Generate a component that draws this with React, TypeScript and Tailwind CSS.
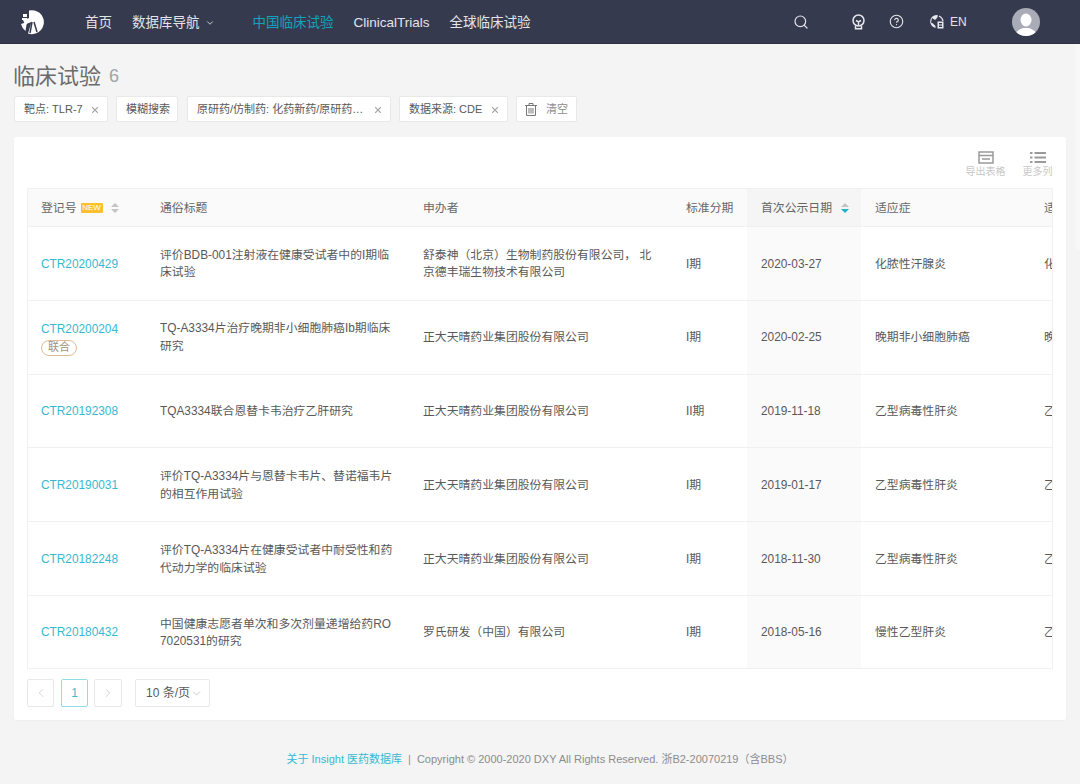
import { ChevronDown, ChevronLeft, ChevronRight, HelpCircle, Search, X } from "lucide-react"

type Trial = {
  id: string;
  title: string;
  sponsor: string;
  phase: string;
  date: string;
  indication: string;
  combo?: boolean;
};

const trials: Trial[] = [
  { id: "CTR20200429", title: "评价BDB-001注射液在健康受试者中的I期临床试验", sponsor: "舒泰神（北京）生物制药股份有限公司， 北京德丰瑞生物技术有限公司", phase: "I期", date: "2020-03-27", indication: "化脓性汗腺炎" },
  { id: "CTR20200204", title: "TQ-A3334片治疗晚期非小细胞肺癌Ib期临床研究", sponsor: "正大天晴药业集团股份有限公司", phase: "I期", date: "2020-02-25", indication: "晚期非小细胞肺癌", combo: true },
  { id: "CTR20192308", title: "TQA3334联合恩替卡韦治疗乙肝研究", sponsor: "正大天晴药业集团股份有限公司", phase: "II期", date: "2019-11-18", indication: "乙型病毒性肝炎" },
  { id: "CTR20190031", title: "评价TQ-A3334片与恩替卡韦片、替诺福韦片的相互作用试验", sponsor: "正大天晴药业集团股份有限公司", phase: "I期", date: "2019-01-17", indication: "乙型病毒性肝炎" },
  { id: "CTR20182248", title: "评价TQ-A3334片在健康受试者中耐受性和药代动力学的临床试验", sponsor: "正大天晴药业集团股份有限公司", phase: "I期", date: "2018-11-30", indication: "乙型病毒性肝炎" },
  { id: "CTR20180432", title: "中国健康志愿者单次和多次剂量递增给药RO7020531的研究", sponsor: "罗氏研发（中国）有限公司", phase: "I期", date: "2018-05-16", indication: "慢性乙型肝炎" },
]

function Logo() {
  return (
    <svg width="26" height="26" viewBox="0 0 26 26">
      <path d="M10 1.500A12 12 0 1 1 9 24.500L12.500 13L6 15.500L4 11L10 9Z" fill="#fff" />
      <path d="M4 5h4v3H4zM3 9h5v2H3z" fill="#fff" />
      <path d="M2 15l6-2-1.500 9A12 12 0 0 1 2 15Z" fill="#fff" />
      <path d="M13 13L11 24M15 13l3 10" stroke="#363a4f" strokeWidth="1.500" fill="none" />
    </svg>
  )
}

function BulbIcon() {
  return (
    <svg width="15" height="16" viewBox="0 0 15 16" fill="none" stroke="#e8e8ec" strokeWidth="1.500">
      <circle cx="7.500" cy="6.500" r="5.500" />
      <path d="M5 6.500l2.500 1.500L10 6.500M7.500 8v3.500M4.500 12v2.800h6V12" />
    </svg>
  )
}

function LangIcon() {
  return (
    <svg width="15" height="15" viewBox="0 0 15 15">
      <path d="M7.500 1a6.500 6.500 0 0 0-1 12.900V12L4 9.500 2 8.500 3 4l3 2 2-2 1-2.500A6.500 6.500 0 0 0 7.500 1Z" fill="#e8e8ec" />
      <path d="M10 2a6.500 6.500 0 0 1 4 5" stroke="#e8e8ec" strokeWidth="1.300" fill="none" />
      <rect x="8.500" y="7.500" width="6" height="7" fill="#e8e8ec" />
      <path d="M10 9.500h3M10 11h3M10 12.500h3" stroke="#363a4f" />
    </svg>
  )
}

function TrashIcon() {
  return (
    <svg width="12" height="13" viewBox="0 0 12 13" fill="none" stroke="#777" strokeWidth="1">
      <path d="M0 2.500h12M4 2.500V.5h4v2M1.500 2.500v10h9v-10M4 5v5.500M6 5v5.500M8 5v5.500" />
    </svg>
  )
}

function Avatar() {
  return (
    <svg width="28" height="28" viewBox="0 0 28 28" className="rounded-full">
      <rect width="28" height="28" fill="#a9abb6" />
      <ellipse cx="14" cy="12" rx="5.500" ry="6.500" fill="#fff" />
      <path d="M3 28c1-6 6-7 8-8h6c2 1 7 2 8 8Z" fill="#fff" />
    </svg>
  )
}

function SortArrows({ active }: { active?: boolean }) {
  return (
    <span className="flex flex-col gap-[2px]">
      <span className="h-0 w-0 border-x-[4px] border-b-[4px] border-x-transparent border-b-[#c4c4c4]" />
      <span className={`h-0 w-0 border-x-[4px] border-t-[4px] border-x-transparent ${active ? "border-t-[#1db5cd]" : "border-t-[#c4c4c4]"}`} />
    </span>
  )
}

function FilterTag({ label, closable = true, className = "" }: { label: string; closable?: boolean; className?: string }) {
  return (
    <div className={`flex h-[26px] items-center justify-between rounded-[2px] border border-[#e8e8e8] bg-white pl-[9px] pr-[7px] pt-px text-[11px] whitespace-nowrap text-[#595959] ${className}`}>
      <span>{label}</span>
      {closable && <X size={10} strokeWidth={2.600} className="text-[#a8a8a8]" />}
    </div>
  )
}

function PageButton({ children, active, className = "w-[27px]" }: { children: React.ReactNode; active?: boolean; className?: string }) {
  return (
    <div className={`flex h-[28px] items-center justify-center rounded-[2px] border text-[12px] ${className} ${active ? "border-[#8fdde8] text-[#3fb9cf]" : "border-[#e8e8e8] text-[#c8c8c8]"}`}>
      {children}
    </div>
  )
}

export default function App() {
  return (
    <div className="relative flex min-h-[784px] flex-col bg-[#f4f4f4] font-['Liberation_Sans','Noto_Sans_CJK_SC',sans-serif] text-[#595959]">
      <div className="absolute right-0 top-[44px] h-[206px] w-[5px] bg-[#f7f7f7]" />
      <header className="flex h-[44px] items-center border-b border-[#2d3144] bg-[#363a4f] text-[13.5px] text-[#e4e4e8]">
        <div className="ml-[19px] flex w-[66px] items-center"><Logo /></div>
        <nav className="flex items-center pt-[3px]">
          <span className="mr-[20px]">首页</span>
          <span className="flex items-center">数据库导航<ChevronDown size={10} className="ml-[5px]" /></span>
          <span className="ml-[38px] text-[#10a5bd]">中国临床试验</span>
          <span className="ml-[20px]">ClinicalTrials</span>
          <span className="ml-[20px]">全球临床试验</span>
        </nav>
        <div className="ml-auto flex items-center">
          <Search size={16} strokeWidth={1.800} className="mr-[42px]" />
          <BulbIcon />
          <HelpCircle size={15} strokeWidth={1.800} className="ml-[23px]" />
          <span className="ml-[25px]"><LangIcon /></span>
          <span className="ml-[6px] w-[62px] pt-px text-[12px]">EN</span>
          <span className="mr-[40px]"><Avatar /></span>
        </div>
      </header>

      <main className="flex flex-1 flex-col px-[14px]">
        <h1 className="mt-[17px] -ml-px flex h-[30px] items-center text-[22px] font-normal text-[#6b6b6b]">
          临床试验<span className="ml-[8px] text-[18px] text-[#a3a3a3]">6</span>
        </h1>
        <div className="mt-[5px] flex gap-[8px]">
          <FilterTag label="靶点: TLR-7" className="w-[94px]" />
          <FilterTag label="模糊搜索" closable={false} className="w-[62px]" />
          <FilterTag label="原研药/仿制药: 化药新药/原研药…" className="ml-px w-[204px]" />
          <FilterTag label="数据来源: CDE" className="w-[109px]" />
          <div className="flex h-[26px] w-[61px] items-center justify-center gap-[9px] rounded-[2px] border border-[#e8e8e8] bg-white pt-px text-[11px] text-[#8c8c8c]">
            <TrashIcon />
            <span>清空</span>
          </div>
        </div>

        <section className="mt-[15px] h-[583px] rounded-[2px] bg-white px-[13px] shadow-[0_1px_2px_rgba(0,0,0,0.03)]">
          <div className="flex h-[51px] items-start justify-end pt-[14px] text-[10px] text-[#c8c8c8]">
            <div className="flex w-[41px] flex-col items-center">
              <svg width="16" height="13" viewBox="0 0 16 13" fill="none" stroke="#9a9a9a" strokeWidth="1.500">
                <rect x="1" y="1" width="14" height="11" />
                <path d="M1 4.500h14M4 8h8" />
              </svg>
              <span className="mt-[1px] leading-[14px]">导出表格</span>
            </div>
            <div className="ml-[16px] flex w-[31px] flex-col items-center">
              <svg width="16" height="13" viewBox="0 0 16 13" stroke="#9a9a9a" strokeWidth="1.800">
                <path d="M0 2h2.500M4.500 2H16M0 6.500h2.500M4.500 6.500H16M0 11h2.500M4.500 11H16" />
              </svg>
              <span className="mt-[1px] leading-[14px]">更多列</span>
            </div>
          </div>

          <div className="overflow-hidden border-x border-b border-[#f0f0f0]">
            <table className="w-[1160px] table-fixed border-collapse text-left text-[11.85px]">
              <colgroup>
                <col className="w-[118px]" />
                <col className="w-[263px]" />
                <col className="w-[263px]" />
                <col className="w-[75px]" />
                <col className="w-[114px]" />
                <col className="w-[169px]" />
                <col className="w-[158px]" />
              </colgroup>
              <thead>
                <tr className="h-[38px] border-y border-[#f0f0f0] bg-[#fafafa] text-[#666]">
                  <th className="pl-[13px] pt-[2px] font-normal">
                    <span className="flex items-center">
                      登记号
                      <span className="ml-[4px] flex h-[10px] w-[22px] items-center justify-center rounded-[1px] bg-[#fcc02e] text-[8px] leading-none text-white">NEW</span>
                      <span className="ml-[8px]"><SortArrows /></span>
                    </span>
                  </th>
                  <th className="pl-[14px] pt-[2px] font-normal">通俗标题</th>
                  <th className="pl-[14px] pt-[2px] font-normal">申办者</th>
                  <th className="pl-[14px] pt-[2px] font-normal">标准分期</th>
                  <th className="bg-[#f5f5f5] pl-[14px] pt-[2px] font-normal">
                    <span className="flex items-center gap-[9px]">首次公示日期<SortArrows active /></span>
                  </th>
                  <th className="pl-[14px] pt-[2px] font-normal">适应症</th>
                  <th className="pl-[14px] pt-[2px] font-normal">适应症</th>
                </tr>
              </thead>
              <tbody>
                {trials.map((t, i) => (
                  <tr key={t.id} className="h-[73.8px] border-b border-[#f0f0f0] leading-[17.7px] last:h-[73px] last:border-b-0">
                    <td className="pl-[13px] pt-[2px]">
                      <div className="text-[#36b9d0]">{t.id}</div>
                      {t.combo && (
                        <span className="mt-[1px] flex h-[16px] w-[36px] items-center justify-center rounded-full border border-[#ddbb98] text-[11px] text-[#a58f78]">联合</span>
                      )}
                    </td>
                    <td className="pl-[14px] pr-[14px] pt-[2px] break-all">{t.title}</td>
                    <td className="pl-[14px] pr-[17px] pt-[2px]">{t.sponsor}</td>
                    <td className="pl-[14px] pt-[2px]">{t.phase}</td>
                    <td className="bg-[#fafafa] pl-[14px] pt-[2px]">{t.date}</td>
                    <td className="pl-[14px] pt-[2px]">{t.indication}</td>
                    <td className="pl-[14px] pt-[2px] whitespace-nowrap">{i === 5 ? "乙型肝炎" : t.indication}</td>
                  </tr>
                ))}
              </tbody>
            </table>
          </div>

          <div className="mt-[10px] flex items-center">
            <PageButton><ChevronLeft size={14} strokeWidth={1.300} /></PageButton>
            <div className="ml-[7px]"><PageButton active>1</PageButton></div>
            <div className="ml-[6px]"><PageButton className="w-[28px]"><ChevronRight size={14} strokeWidth={1.300} /></PageButton></div>
            <div className="ml-[13px] flex h-[28px] w-[75px] items-center rounded-[2px] border border-[#e8e8e8] pl-[10px] text-[12px]">
              10 条/页<ChevronDown size={13} strokeWidth={1.100} className="text-[#aaa]" />
            </div>
          </div>
        </section>

        <footer className="mt-[30px] pb-[18px] text-center text-[11px] leading-[18px] text-[#8c8c8c]">
          <span className="text-[#36b9d0]">关于 Insight 医药数据库</span>
          <span className="mx-[6px]">|</span>
          Copyright © 2000-2020 DXY All Rights Reserved. 浙B2-20070219（含BBS）
        </footer>
      </main>
    </div>
  )
}
